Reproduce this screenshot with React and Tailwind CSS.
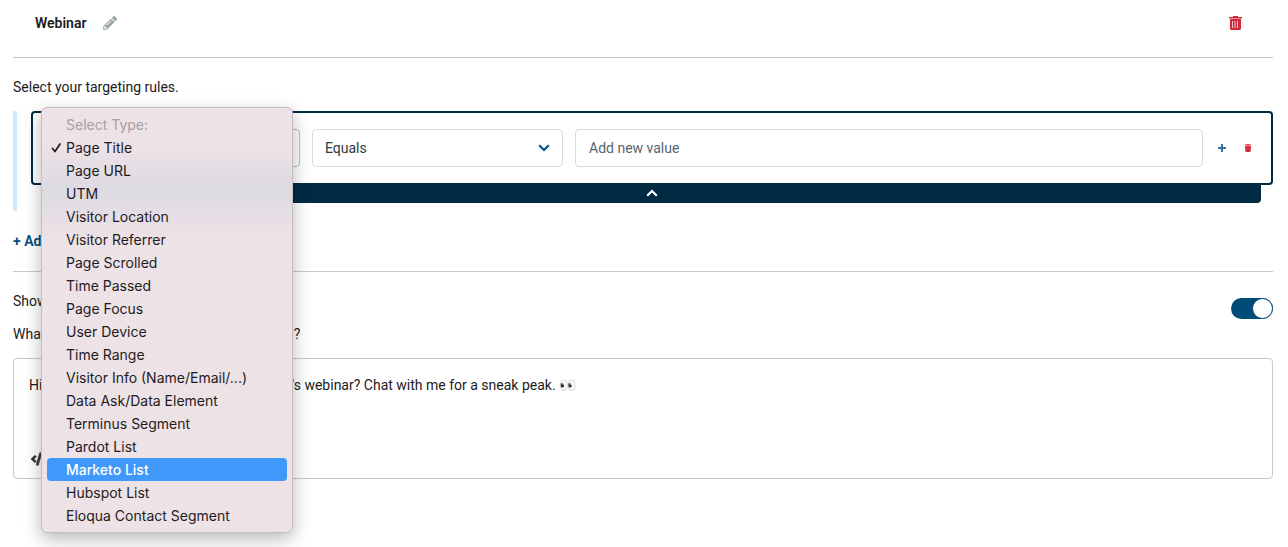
import { useState } from 'react'
import { FaPencilAlt, FaCode } from 'react-icons/fa'
import { FaTrash } from 'react-icons/fa6'

const ruleTypes = [
  'Page Title',
  'Page URL',
  'UTM',
  'Visitor Location',
  'Visitor Referrer',
  'Page Scrolled',
  'Time Passed',
  'Page Focus',
  'User Device',
  'Time Range',
  'Visitor Info (Name/Email/...)',
  'Data Ask/Data Element',
  'Terminus Segment',
  'Pardot List',
  'Marketo List',
  'Hubspot List',
  'Eloqua Contact Segment',
]

function TrashCan() {
  return (
    <svg width="13" height="14" viewBox="0 0 13 14" fill="none" aria-hidden="true">
      <path d="M4 0h5v1h4v2H0V1h4z" fill="#d22a3a" />
      <path d="M1 2h11v10.5a1.5 1.5 0 0 1-1.5 1.5h-8A1.5 1.5 0 0 1 1 12.5z" fill="#d22a3a" />
      <path d="M0 2.500h13" stroke="#ec98a0" />
      <path d="M3.500 5v7M6 5v7M8.500 5v7" stroke="#f6c4c8" />
    </svg>
  )
}

function Chevron({ className }) {
  return (
    <svg className={className} width="12" height="8" viewBox="0 0 12 8" fill="none" aria-hidden="true">
      <path d="M1.200 1.200L6 6L10.800 1.200" stroke="currentColor" strokeWidth="2.200" />
    </svg>
  )
}

function TypeMenu({ selected, active, onHover, onSelect }) {
  return (
    <div
      role="listbox"
      aria-label="Select Type"
      className="absolute -top-[22px] -left-2 z-10 w-[252px] rounded-md border border-[#c3bdc0] bg-[#ede2e6] bg-[linear-gradient(to_bottom,#ede2e6_40px,#dfdbe3_74px,#dfdbe3_88px,#ede2e6_130px)] p-[5px] font-['Inter',sans-serif] text-sm shadow-[0_6px_18px_rgba(0,0,0,0.28)]"
    >
      <div className="h-[23px] pl-[19px] leading-[23px] text-[#a79fa3]">Select Type:</div>
      {ruleTypes.map((type) => (
        <button
          key={type}
          type="button"
          role="option"
          aria-selected={type === selected}
          onMouseEnter={() => onHover(type)}
          onClick={() => onSelect(type)}
          className={`flex h-[23px] w-full items-center rounded whitespace-nowrap ${
            type === active ? 'bg-[#3f99fb] font-medium text-white' : 'text-[#1f1c1e]'
          }`}
        >
          <span className="flex w-[19px] shrink-0 pl-1">
            {type === selected && (
              <svg width="11" height="11" viewBox="0 0 11 11" fill="none" aria-hidden="true">
                <path d="M1.500 6.500L4 9.500L9 2" stroke="currentColor" strokeWidth="1.700" strokeLinecap="round" strokeLinejoin="round" />
              </svg>
            )}
          </span>
          {type}
        </button>
      ))}
    </div>
  )
}

function TargetingRule() {
  const [type, setType] = useState('Page Title')
  const [active, setActive] = useState('Marketo List')
  const [menuOpen, setMenuOpen] = useState(true)

  const handleSelect = (next) => {
    setType(next)
    setMenuOpen(false)
  }

  return (
    <div className="mt-[14px] border-l-4 border-[#cbecff] pb-2 pl-[14px]">
      <div className="flex items-center rounded border-2 border-[#002b42] bg-white py-4 pr-[10px] pl-4">
        <div className="relative w-[251px] shrink-0">
          <button
            type="button"
            aria-label="Rule type"
            aria-haspopup="listbox"
            aria-expanded={menuOpen}
            onClick={() => setMenuOpen(!menuOpen)}
            className="flex h-[38px] w-full items-center justify-between rounded border border-[#b9c3c4] px-3 text-[#2c3a42]"
          >
            <span>{!menuOpen && type}</span>
            <Chevron className="text-[#00558a]" />
          </button>
          {menuOpen && (
            <TypeMenu selected={type} active={active} onHover={setActive} onSelect={handleSelect} />
          )}
        </div>
        <div className="relative ml-3 w-[251px] shrink-0">
          <select
            aria-label="Condition"
            defaultValue="Equals"
            className="h-[38px] w-full appearance-none rounded border border-[#d3dbdb] bg-white px-3 text-[#2c3a42]"
          >
            <option>Equals</option>
            <option>Contains</option>
          </select>
          <Chevron className="pointer-events-none absolute top-[15px] right-[13px] text-[#00558a]" />
        </div>
        <input
          type="text"
          aria-label="Value"
          placeholder="Add new value"
          className="ml-3 h-[38px] min-w-0 flex-1 rounded border border-[#d3dbdb] px-[13px] placeholder-[#56656d]"
        />
        <button type="button" aria-label="Add value" className="ml-[6px] flex w-[26px] justify-center text-[#2f76a3]">
          <svg width="8" height="8" viewBox="0 0 8 8" aria-hidden="true">
            <path d="M3 0h2v3h3v2H5v3H3V5H0V3h3z" fill="currentColor" />
          </svg>
        </button>
        <button type="button" aria-label="Delete rule" className="flex w-[26px] justify-center text-[#d8303f]">
          <FaTrash size={8} />
        </button>
      </div>
      <div className="mx-3">
        <button
          type="button"
          aria-label="Collapse rule"
          className="flex h-[18px] w-full items-center justify-center rounded-b bg-[#002b42] text-white"
        >
          <Chevron className="mb-[2px] rotate-180" />
        </button>
      </div>
    </div>
  )
}

export default function App() {
  const [enabled, setEnabled] = useState(true)

  return (
    <main className="min-h-screen bg-white pr-[15px] pl-[13px] font-['Roboto',sans-serif] text-sm text-[#1b1b1b]">
      <header className="flex h-[58px] items-start justify-between border-b border-[#c8c8c8] pt-[13px] pr-[31px] pl-[22px]">
        <div className="flex items-center gap-4">
          <h1 className="font-semibold">Webinar</h1>
          <button type="button" aria-label="Rename" className="text-[#9ca8ae]">
            <FaPencilAlt size={14} />
          </button>
        </div>
        <button type="button" aria-label="Delete" className="mt-[3px]">
          <TrashCan />
        </button>
      </header>

      <section className="border-b border-[#c8c8c8] pt-[19px] pb-5">
        <p>Select your targeting rules.</p>
        <TargetingRule />
        <button type="button" className="mt-5 block font-semibold text-[#004b78]">
          + Add Rule
        </button>
      </section>

      <section className="pt-[19px]">
        <div className="flex items-start justify-between">
          <label htmlFor="show-message">Show a message</label>
          <span className="relative mt-[7px] flex h-[21px] w-[42px]">
            <input
              id="show-message"
              type="checkbox"
              role="switch"
              checked={enabled}
              onChange={(e) => setEnabled(e.target.checked)}
              className="peer h-full w-full appearance-none rounded-full bg-[#b8c2c8] checked:bg-[#004b78]"
            />
            <span className="pointer-events-none absolute top-0 left-0 size-[21px] rounded-full border border-[#004b78] bg-white peer-checked:left-[21px]" />
          </span>
        </div>
        <label htmlFor="message" className="mt-[5px] block">
          What follow-up message should be displayed?
        </label>
        <div className="mt-[14px] rounded border border-[#c8c8c8] px-[15px] pt-4 pb-[11px]">
          <textarea
            id="message"
            rows={3}
            defaultValue="Hi there! Are you registering for this month's webinar? Chat with me for a sneak peak. 👀"
            className="block w-full resize-none outline-none"
          />
          <button type="button" aria-label="Insert code" className="mt-4 ml-[2px] block text-[#3a3a3a]">
            <FaCode size={16} stroke="currentColor" strokeWidth={24} />
          </button>
        </div>
      </section>
    </main>
  )
}
